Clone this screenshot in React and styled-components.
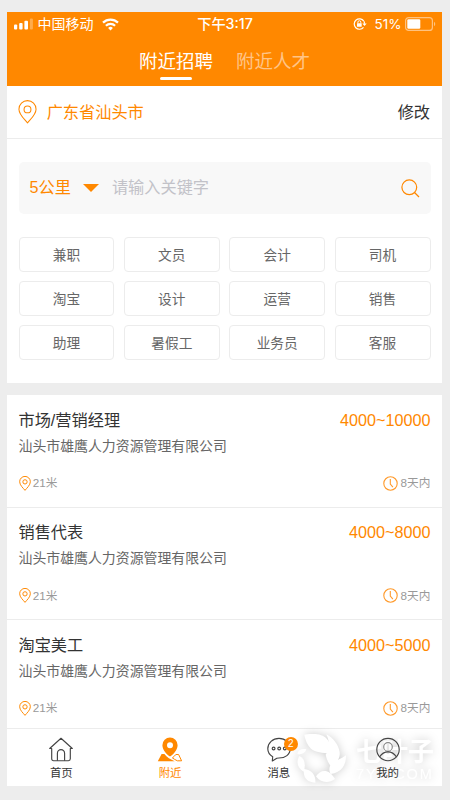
import React from "react";
import styled, { createGlobalStyle } from "styled-components";

const ORANGE = "#ff8800";
const LINE = "#ececec";

const tags = [
  "兼职", "文员", "会计", "司机",
  "淘宝", "设计", "运营", "销售",
  "助理", "暑假工", "业务员", "客服",
];

const jobs = [
  { title: "市场/营销经理", salary: "4000~10000" },
  { title: "销售代表", salary: "4000~8000" },
  { title: "淘宝美工", salary: "4000~5000" },
];

const PinIcon = ({ width, height, stroke }) => (
  <svg width={width} height={height} viewBox="0 0 18 23" fill="none" stroke={ORANGE} strokeWidth={stroke}>
    <path d="M9 22C6.5 18.8.8 14 .8 8.8a8.2 8.2 0 0 1 16.4 0C17.2 14 11.5 18.8 9 22z" strokeLinejoin="round" />
    <circle cx="9" cy="9" r="3.3" />
  </svg>
);

const ClockIcon = () => (
  <svg width="15" height="15" viewBox="0 0 15 15" fill="none" stroke="#ff9a2b" strokeWidth="1.1">
    <circle cx="7.5" cy="7.5" r="6.7" />
    <path d="M7.3 3v5l2.6 3.2" />
  </svg>
);

const SearchIcon = () => (
  <svg width="19" height="19" viewBox="0 0 19 19" fill="none" stroke={ORANGE} strokeWidth="1.2">
    <circle cx="8.3" cy="8.3" r="7.4" />
    <path d="M13.5 13.5l4.5 4.5" />
  </svg>
);

const SignalIcon = () => (
  <svg width="19" height="12" viewBox="0 0 19 12" fill="#fff">
    <rect x="0" y="6.5" width="3.2" height="5" rx="1" />
    <rect x="5.2" y="5" width="3.4" height="6.5" rx="1" />
    <rect x="10.4" y="2.8" width="3.6" height="8.7" rx="1" />
    <rect x="15.9" y="0.5" width="3" height="11" rx="1" opacity="0.3" />
  </svg>
);

const WifiIcon = () => (
  <svg width="17" height="13" viewBox="0 0 17 13" fill="none" stroke="#fff" strokeWidth="2.2">
    <path d="M1 4.6a10.8 10.8 0 0 1 15 0" />
    <path d="M3.9 7.7a6.6 6.6 0 0 1 9.2 0" />
    <path d="M8.5 12.5l-2.4-2.6a3.3 3.3 0 0 1 4.8 0z" fill="#fff" stroke="none" />
  </svg>
);

const LockIcon = () => (
  <svg width="14" height="12" viewBox="0 0 14 12" fill="none" stroke="#fff" strokeWidth="1.2">
    <path d="M10.8 3.2A5.2 5.2 0 1 0 10.5 9.3" />
    <path d="M10.9 3.2a5 5 0 0 1 .6 2.6" />
    <path d="M9.3 5.4h4.4l-2.2 2.7z" fill="#fff" stroke="none" />
    <rect x="4" y="5.3" width="4.7" height="3.5" rx="0.5" fill="#fff" stroke="none" />
    <path d="M4.9 5.5V4.2a1.45 1.45 0 0 1 2.9 0v1.3" strokeWidth="1" />
  </svg>
);

const BatteryIcon = () => (
  <svg width="31" height="14" viewBox="0 0 31 14" fill="none">
    <rect x="0.6" y="0.6" width="26.8" height="12.8" rx="3" stroke="#ffc27f" strokeWidth="1.2" />
    <rect x="2.3" y="2.3" width="13" height="9.4" rx="1.2" fill="#fff" />
    <path d="M29 4.8c1.7.7 1.7 3.7 0 4.4z" fill="#ffc27f" />
  </svg>
);

const HomeIcon = () => (
  <svg width="24" height="25" viewBox="0 0 24 25" fill="none" stroke="#444" strokeWidth="1.15" strokeLinejoin="round">
    <path d="M2.7 11.5H.7L12 1.3l11.3 10.2h-2v10.3c0 1.2-.7 1.9-1.9 1.9H4.6c-1.2 0-1.9-.7-1.9-1.9z" />
    <path d="M8.4 23.7v-7.5a3.6 3.6 0 0 1 7.2 0v7.5" />
  </svg>
);

const NearbyIcon = () => (
  <svg width="26" height="25" viewBox="0 0 26 25" fill={ORANGE}>
    <path d="M4.6 17h2.8c2.4 3.5 6.2 5.3 10.3 7.3H.8z" />
    <path d="M18.8 17.5h2.8l3 6.3h-4.2c-1.9-.9-3.500-1.800-5-2.900 1.400-1 2.500-2.200 3.400-3.400z" fill="none" stroke={ORANGE} strokeWidth="1" />
    <path fillRule="evenodd" d="M13 .6a7.6 7.6 0 0 1 7.6 7.600c0 4.800-4.600 9.300-7.600 11.400-3-2.100-7.600-6.600-7.600-11.400A7.600 7.600 0 0 1 13 .6zm0 4.600a3 3 0 1 0 0 6 3 3 0 0 0 0-6z" />
  </svg>
);

const MessageIcon = () => (
  <svg width="24" height="25" viewBox="0 0 24 25" fill="none" stroke="#444" strokeWidth="1.15">
    <path d="M5.3 24l.4-4.2C2.7 18 .8 15.1.8 11.8.8 5.9 5.8 1.3 12 1.3s11.2 4.6 11.2 10.5S18.2 21 12 21c-1.1 0-1.5 0-2.2.2z" strokeLinejoin="round" />
    <circle cx="6.6" cy="11.5" r="1.4" />
    <circle cx="12.2" cy="11.5" r="1.4" />
    <circle cx="17.8" cy="11.5" r="1.4" />
  </svg>
);

const UserIcon = () => (
  <svg width="24" height="25" viewBox="0 0 24 25" fill="none" stroke="#444" strokeWidth="1.15">
    <circle cx="12" cy="12.5" r="11.2" />
    <circle cx="12" cy="9.9" r="4.3" stroke="#888" />
    <path d="M3.5 20c2.3-3.5 5.2-5.1 8.5-5.1s6.2 1.6 8.5 5.1" />
  </svg>
);

const BrandLeaves = () => (
  <svg width="50" height="52" viewBox="0 0 150 156" fill="#fff">
    <path d="M22 2c30-5 58-3 72 18 8 13 8 26 3 38-18-2-42-2-55-14C31 33 25 18 22 2z" />
    <path d="M88 1c21 12 36 29 40 54 2 18-9 32-25 43-8-9-14-21-17-36 12-16 13-38 2-61z" />
    <path d="M147 64c1 29-13 52-46 56-6-13-5-23 5-33 13-10 28-12 41-23z" />
    <path d="M57 127c14-22 39-24 57 8-20 14-44 11-57-8z" />
    <path d="M21 105c21 2 36 17 34 41-25-1-38-16-34-41z" />
    <path d="M7 66c16 7 20 25 13 47C3 103-4 86 7 66z" />
    <path d="M1 60c2-12 13-17 27-14-3 10-13 17-27 14z" />
  </svg>
);

const nav = [
  { label: "首页", icon: <HomeIcon /> },
  { label: "附近", icon: <NearbyIcon />, active: true },
  { label: "消息", icon: <MessageIcon />, badge: 2 },
  { label: "我的", icon: <UserIcon /> },
];

const App = () => {
  return (
    <>
      <GlobalStyle />
      <Page>
        <Phone>
          <Header>
            <StatusBar>
              <StatusLeft>
                <SignalIcon />
                <Carrier>中国移动</Carrier>
                <WifiIcon />
              </StatusLeft>
              <Clock>下午3:17</Clock>
              <StatusRight>
                <LockIcon />
                <Percent>51%</Percent>
                <BatteryIcon />
              </StatusRight>
            </StatusBar>
            <Tabs>
              <Tab $active>附近招聘</Tab>
              <Tab>附近人才</Tab>
            </Tabs>
          </Header>

          <LocationBar>
            <PinIcon width={19} height={24} stroke={1} />
            <City>广东省汕头市</City>
            <Edit>修改</Edit>
          </LocationBar>

          <Filter>
            <SearchBox>
              <Distance>5公里</Distance>
              <Caret />
              <Placeholder>请输入关键字</Placeholder>
              <SearchIcon />
            </SearchBox>
            <TagGrid>
              {tags.map((tag) => (
                <Tag key={tag}>{tag}</Tag>
              ))}
            </TagGrid>
          </Filter>

          <JobList>
            {jobs.map((job) => (
              <Job key={job.title}>
                <JobTop>
                  <JobTitle>{job.title}</JobTitle>
                  <Salary>{job.salary}</Salary>
                </JobTop>
                <Company>汕头市雄鹰人力资源管理有限公司</Company>
                <JobMeta>
                  <MetaItem>
                    <PinIcon width={12} height={15} stroke={1.5} />
                    21米
                  </MetaItem>
                  <MetaItem>
                    <ClockIcon />
                    8天内
                  </MetaItem>
                </JobMeta>
              </Job>
            ))}
          </JobList>

          <NavBar>
            <Watermark>
              <BrandLeaves />
              <BrandText>
                <BrandName>七叶子</BrandName>
                <BrandSite>7YZ.COM</BrandSite>
              </BrandText>
            </Watermark>
            {nav.map((item) => (
              <NavItem key={item.label} $active={item.active}>
                <NavIcon>
                  {item.icon}
                  {item.badge && <Badge>{item.badge}</Badge>}
                </NavIcon>
                <NavLabel>{item.label}</NavLabel>
              </NavItem>
            ))}
          </NavBar>
        </Phone>
      </Page>
    </>
  );
};

const GlobalStyle = createGlobalStyle`
  * {
    box-sizing: border-box;
  }
  body {
    margin: 0;
    background: #ededed;
    font-family: "Liberation Sans", "Noto Sans CJK SC", sans-serif;
  }
  svg {
    display: block;
    flex: none;
  }
`;

const Page = styled.div`
  width: 450px;
  height: 800px;
  padding: 12px 8px 14px 7px;
  background: #ededed;
  overflow: hidden;
`;

const Phone = styled.div`
  height: 774px;
  display: flex;
  flex-direction: column;
  white-space: nowrap;
`;

const Header = styled.div`
  height: 74px;
  flex: none;
  background: ${ORANGE};
  color: #fff;
`;

const StatusBar = styled.div`
  height: 24px;
  padding: 0 6px 0 7px;
  display: grid;
  grid-template-columns: 1fr auto 1fr;
  align-items: center;
  font-family: Inter, "Noto Sans CJK SC", sans-serif;
  line-height: 24px;
`;

const StatusLeft = styled.div`
  display: flex;
  align-items: center;
`;

const StatusRight = styled.div`
  display: flex;
  align-items: center;
  justify-content: flex-end;
`;

const Carrier = styled.span`
  margin: 0 8px 0 4.5px;
  font-size: 14px;
`;

const Clock = styled.span`
  font-size: 14.2px;
  font-weight: 500;
`;

const Percent = styled.span`
  margin: 0 3.5px 0 8px;
  font-size: 13.5px;
`;

const Tabs = styled.div`
  height: 50px;
  display: flex;
  justify-content: center;
  gap: 23px;
`;

const Tab = styled.div`
  position: relative;
  font-size: 18.5px;
  line-height: 51px;
  color: ${(props) => (props.$active ? "#fff" : "#ffc487")};

  &::after {
    content: "";
    display: ${(props) => (props.$active ? "block" : "none")};
    position: absolute;
    left: 21px;
    top: 41px;
    width: 32px;
    height: 2.5px;
    border-radius: 2px;
    background: #fff;
  }
`;

const LocationBar = styled.div`
  height: 53px;
  flex: none;
  padding: 0 12px 0 11px;
  display: flex;
  align-items: center;
  background: #fff;
  border-bottom: 1px solid ${LINE};
  font-size: 16.2px;
  line-height: 24px;
`;

const City = styled.span`
  flex: 1;
  margin-left: 9.7px;
  color: ${ORANGE};
`;

const Edit = styled.span`
  color: #333;
`;

const Filter = styled.div`
  height: 244px;
  flex: none;
  padding: 23px 11.5px 0;
  background: #fff;
`;

const SearchBox = styled.div`
  height: 52px;
  padding: 0 11px;
  display: flex;
  align-items: center;
  border-radius: 5px;
  background: #f8f8f8;
  font-size: 16.2px;
  line-height: 24px;
`;

const Distance = styled.span`
  padding-bottom: 2px;
  color: ${ORANGE};
`;

const Caret = styled.span`
  margin: 0 13px 0 12px;
  border: 8px solid transparent;
  border-top-color: ${ORANGE};
  border-bottom: 0;
`;

const Placeholder = styled.span`
  flex: 1;
  padding-bottom: 2px;
  color: #c2c2c8;
`;

const TagGrid = styled.div`
  margin-top: 23px;
  display: grid;
  grid-template-columns: repeat(4, 1fr);
  grid-auto-rows: 35px;
  gap: 9px 9.5px;
`;

const Tag = styled.div`
  border: 1px solid ${LINE};
  border-radius: 4px;
  color: #666;
  font-size: 13.7px;
  line-height: 35px;
  text-align: center;
`;

const JobList = styled.div`
  height: 333px;
  flex: none;
  margin-top: 12px;
  background: #fff;
  overflow: hidden;
`;

const Job = styled.div`
  height: 112.6px;
  padding: 12.5px 11.5px 0;
  border-bottom: 1px solid ${LINE};
`;

const JobTop = styled.div`
  display: flex;
  justify-content: space-between;
  font-size: 16.2px;
  line-height: 24px;
`;

const JobTitle = styled.span`
  color: #333;
`;

const Salary = styled.span`
  color: ${ORANGE};
`;

const Company = styled.div`
  margin-top: 4.3px;
  color: #666;
  font-size: 13.9px;
  line-height: 20px;
`;

const JobMeta = styled.div`
  margin-top: 19.4px;
  display: flex;
  justify-content: space-between;
`;

const MetaItem = styled.div`
  height: 16px;
  display: flex;
  align-items: center;
  gap: 2.2px;
  color: #999;
  font-size: 11.7px;
  line-height: 16px;
`;

const NavBar = styled.div`
  position: relative;
  height: 58px;
  flex: none;
  display: grid;
  grid-template-columns: repeat(4, 1fr);
  background: #fff;
  border-top: 1px solid ${LINE};
`;

const NavItem = styled.div`
  position: relative;
  padding-top: 7.5px;
  display: flex;
  flex-direction: column;
  align-items: center;
  color: ${(props) => (props.$active ? ORANGE : "#333")};
`;

const NavIcon = styled.div`
  position: relative;
`;

const NavLabel = styled.span`
  margin-top: 3px;
  font-size: 11.4px;
  line-height: 16px;
`;

const Badge = styled.span`
  position: absolute;
  top: 0;
  left: 17px;
  width: 14px;
  height: 14px;
  border-radius: 50%;
  background: ${ORANGE};
  color: #fff;
  font-size: 10px;
  line-height: 14px;
  text-align: center;
`;

const Watermark = styled.div`
  position: absolute;
  left: 290px;
  top: 5px;
  display: flex;
  gap: 9px;
  color: #fff;
  filter: drop-shadow(0 0 5px rgba(0, 0, 0, 0.2));
`;

const BrandText = styled.div`
  width: 80px;
  padding-top: 4px;
`;

const BrandName = styled.div`
  font-size: 26px;
  font-weight: 700;
  line-height: 28px;
`;

const BrandSite = styled.div`
  font-size: 14.5px;
  line-height: 17px;
  letter-spacing: 1.9px;
`;

export default App;
